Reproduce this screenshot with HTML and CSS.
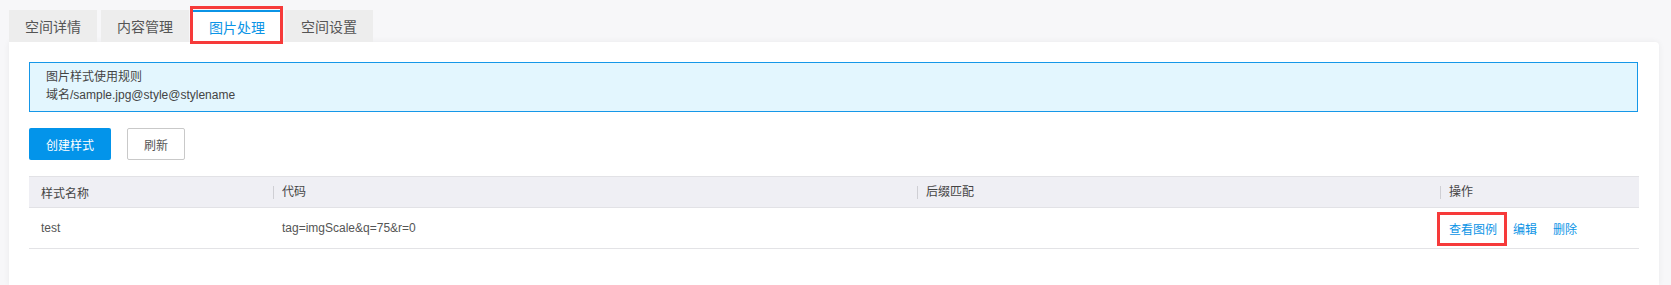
FILE: index.html
```html
<!DOCTYPE html>
<html lang="zh-CN">
<head>
<meta charset="utf-8">
<title>图片处理</title>
<link rel="stylesheet" href="styles.css">
</head>
<body>
<div class="page">
  <div class="tabs">
    <div class="tab">空间详情</div>
    <div class="tab">内容管理</div>
    <div class="tab active">图片处理<span class="mark mark-tab"></span></div>
    <div class="tab">空间设置</div>
  </div>
  <div class="card">
    <div class="notice">
      <div class="notice-line">图片样式使用规则</div>
      <div class="notice-line">域名/sample.jpg@style@stylename</div>
    </div>
    <div class="actions">
      <button class="btn btn-primary">创建样式</button>
      <button class="btn btn-default">刷新</button>
    </div>
    <div class="table">
      <div class="row head">
        <div class="cell first">样式名称</div>
        <div class="cell"><span class="sep">代码</span></div>
        <div class="cell"><span class="sep">后缀匹配</span></div>
        <div class="cell"><span class="sep">操作</span></div>
      </div>
      <div class="row body">
        <div class="cell first">test</div>
        <div class="cell"><span class="pad">tag=imgScale&amp;q=75&amp;r=0</span></div>
        <div class="cell"><span class="pad"></span></div>
        <div class="cell ops">
          <span class="pad">
            <a class="link marked">查看图例<span class="mark mark-link"></span></a><a class="link">编辑</a><a class="link">删除</a>
          </span>
        </div>
      </div>
    </div>
  </div>
</div>
</body>
</html>
```

FILE: styles.css
```css
* { box-sizing: border-box; }
html, body { margin: 0; padding: 0; }
body {
  background: #f7f7f9;
  font-family: "Liberation Sans", "Noto Sans CJK SC", sans-serif;
  color: #555;
  font-size: 12px;
  overflow: hidden;
}
.page {
  padding: 10px 12px 0 9px;
}
.tabs {
  display: flex;
  gap: 4px;
  height: 32px;
}
.tab {
  position: relative;
  width: 88px;
  height: 32px;
  background: #ededed;
  color: #555;
  font-size: 14px;
  line-height: 32px;
  text-align: center;
  font-family: "Noto Sans CJK SC", sans-serif;
}
.tab.active {
  background: #fff;
  color: #0b94e6;
  border-top: 2px solid #0b94e6;
  line-height: 30px;
}
.mark {
  position: absolute;
  border: 3px solid #f63a3a;
  pointer-events: none;
}
.mark-tab {
  top: -6px;
  left: -3px;
  right: -2px;
  bottom: -2px;
}
.card {
  background: #fff;
  border-radius: 0 4px 0 0;
  box-shadow: 0 0 6px rgba(0, 0, 0, 0.06);
  padding: 20px 20px 0 20px;
  height: 243px;
}
.notice {
  border: 1px solid #1597e8;
  background: #e3f6fe;
  padding: 5px 16px 7px;
  width: 1609px;
  color: #444;
}
.notice-line {
  line-height: 18px;
}
.actions {
  display: flex;
  gap: 16px;
  margin-top: 16px;
}
.btn {
  height: 32px;
  font-family: "Noto Sans CJK SC", sans-serif;
  font-size: 12px;
  border-radius: 2px;
  padding: 0;
  cursor: pointer;
}
.btn-primary {
  width: 82px;
  background: #0394ea;
  border: none;
  color: #fff;
}
.btn-default {
  width: 58px;
  background: #fff;
  border: 1px solid #c9c9c9;
  color: #555;
}
.table {
  margin-top: 16px;
  width: 1610px;
}
.row {
  display: grid;
  grid-template-columns: 242px 644px 523px 201px;
}
.row.head {
  background: #efeff4;
  border-top: 1px solid #e2e2e6;
  border-bottom: 1px solid #e2e2e6;
  height: 32px;
  color: #444;
}
.row.body {
  height: 41px;
  border-bottom: 1px solid #e3e3e6;
}
.cell {
  display: flex;
  align-items: center;
  padding-left: 2px;
  font-family: "Liberation Sans", "Noto Sans CJK SC", sans-serif;
}
.cell.first {
  padding-left: 12px;
}
.sep {
  border-left: 1px solid #cfcfd4;
  padding-left: 8px;
  line-height: 13px;
}
.pad {
  padding-left: 9px;
  display: flex;
  align-items: center;
}
.link {
  color: #0b94e6;
  margin-right: 16px;
  cursor: pointer;
  font-family: "Noto Sans CJK SC", sans-serif;
}
.marked {
  position: relative;
}
.mark-link {
  top: -8px;
  left: -12px;
  right: -10px;
  bottom: -9px;
}
```
